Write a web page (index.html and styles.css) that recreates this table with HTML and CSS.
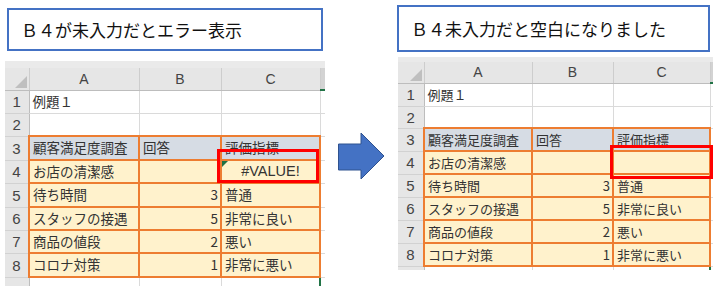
FILE: index.html
```html
<!DOCTYPE html>
<html lang="ja">
<head>
<meta charset="utf-8">
<title>B4 未入力</title>
<link rel="stylesheet" href="styles.css">
</head>
<body>
<div class="page">
  <section class="panel panel-left">
    <div class="title">Ｂ４が未入力だとエラー表示</div>
    <div class="sheet">
      <table>
        <colgroup><col class="c-rn"><col class="c-a"><col class="c-b"><col class="c-c"><col class="c-d"></colgroup>
        <tr class="hdr"><th class="corner"><span class="tri"></span></th><th>A</th><th>B</th><th>C</th><th class="dcol"></th></tr>
        <tr class="r1"><th class="rn">1</th><td>例題１</td><td></td><td></td><td></td></tr>
        <tr class="r2"><th class="rn">2</th><td></td><td></td><td></td><td></td></tr>
        <tr class="r3"><th class="rn">3</th><td class="o h">顧客満足度調査</td><td class="o h">回答</td><td class="o h">評価指標</td><td></td></tr>
        <tr class="r4"><th class="rn">4</th><td class="o f">お店の清潔感</td><td class="o f"></td><td class="o f err"><span class="flag"></span>#VALUE!</td><td></td></tr>
        <tr class="r5"><th class="rn">5</th><td class="o f">待ち時間</td><td class="o f num">3</td><td class="o f">普通</td><td></td></tr>
        <tr class="r6"><th class="rn">6</th><td class="o f">スタッフの接遇</td><td class="o f num">5</td><td class="o f">非常に良い</td><td></td></tr>
        <tr class="r7"><th class="rn">7</th><td class="o f">商品の値段</td><td class="o f num">2</td><td class="o f">悪い</td><td></td></tr>
        <tr class="r8"><th class="rn">8</th><td class="o f">コロナ対策</td><td class="o f num">1</td><td class="o f">非常に悪い</td><td></td></tr>
        <tr class="r9"><th class="rn"></th><td></td><td></td><td></td><td class="sel"></td></tr>
      </table>
      <div class="redbox"></div>
    </div>
  </section>

  <svg class="arrow" width="47" height="48" viewBox="0 0 47 48" aria-hidden="true">
    <polygon points="0.5,12 23,12 23,1 46,24 23,47 23,38 0.5,38" fill="#4472C4" stroke="#2F528F" stroke-width="1"/>
  </svg>

  <section class="panel panel-right">
    <div class="title">Ｂ４未入力だと空白になりました</div>
    <div class="sheet">
      <table>
        <colgroup><col class="c-rn"><col class="c-a"><col class="c-b"><col class="c-c"><col class="c-d"></colgroup>
        <tr class="hdr"><th class="corner"><span class="tri"></span></th><th>A</th><th>B</th><th>C</th><th class="dcol"></th></tr>
        <tr class="r1"><th class="rn">1</th><td>例題１</td><td></td><td></td><td></td></tr>
        <tr class="r2"><th class="rn">2</th><td></td><td></td><td></td><td></td></tr>
        <tr class="r3"><th class="rn">3</th><td class="o h">顧客満足度調査</td><td class="o h">回答</td><td class="o h">評価指標</td><td></td></tr>
        <tr class="r4"><th class="rn">4</th><td class="o f">お店の清潔感</td><td class="o f"></td><td class="o f"></td><td></td></tr>
        <tr class="r5"><th class="rn">5</th><td class="o f">待ち時間</td><td class="o f num">3</td><td class="o f">普通</td><td></td></tr>
        <tr class="r6"><th class="rn">6</th><td class="o f">スタッフの接遇</td><td class="o f num">5</td><td class="o f">非常に良い</td><td></td></tr>
        <tr class="r7"><th class="rn">7</th><td class="o f">商品の値段</td><td class="o f num">2</td><td class="o f">悪い</td><td></td></tr>
        <tr class="r8"><th class="rn">8</th><td class="o f">コロナ対策</td><td class="o f num">1</td><td class="o f">非常に悪い</td><td></td></tr>
        <tr class="r9"><th class="rn"></th><td></td><td></td><td></td><td class="sel"></td></tr>
      </table>
      <div class="redbox"></div>
    </div>
  </section>
</div>
</body>
</html>
```

FILE: styles.css
```css
html, body {
  margin: 0;
  padding: 0;
  background: #ffffff;
}

.page {
  display: flex;
  align-items: flex-start;
  padding-left: 5px;
  height: 286px;
  overflow: hidden;
  font-family: "Noto Sans CJK JP", sans-serif;
  color: #2b2b2b;
}

.panel {
  display: flex;
  flex-direction: column;
}

.title {
  box-sizing: border-box;
  border: 2px solid #4472C4;
  background: #fff;
  display: flex;
  align-items: center;
  font-family: "Noto Sans CJK JP", serif;
  font-weight: 400;
  font-size: 17px;
  color: #111;
  white-space: nowrap;
}

.panel-left {
  width: 320px;
  padding-top: 8px;
}
.panel-left .title {
  margin-left: 2px;
  width: 316px;
  height: 43px;
  padding-left: 12px;
}
.panel-left .sheet {
  margin-top: 10px;
  width: 320px;
  height: 225px;
  padding-top: 7px;
}

.arrow {
  flex: none;
  margin-left: 13px;
  margin-top: 132px;
}

.panel-right {
  width: 316px;
  margin-left: 12px;
  padding-top: 5px;
}
.panel-right .title {
  width: 313px;
  height: 47px;
  padding-left: 12px;
}
.panel-right .sheet {
  margin-top: 5px;
  margin-left: 1px;
  width: 315px;
  height: 213px;
  padding-top: 5px;
}

/* sheet */
.sheet {
  position: relative;
  box-sizing: border-box;
  background: #eaeaea;
  overflow: hidden;
}

.sheet table {
  border-collapse: collapse;
  table-layout: fixed;
  width: 100%;
  background: #fff;
}

.panel-left col.c-rn { width: 24px; }
.panel-left col.c-a { width: 110px; }
.panel-left col.c-b { width: 82px; }
.panel-left col.c-c { width: 99px; }
.panel-left col.c-d { width: 5px; }

.panel-right col.c-rn { width: 26px; }
.panel-right col.c-a { width: 108px; }
.panel-right col.c-b { width: 81px; }
.panel-right col.c-c { width: 97px; }
.panel-right col.c-d { width: 3px; }

.sheet th, .sheet td {
  padding: 0;
  white-space: nowrap;
  overflow: hidden;
  line-height: 1;
  vertical-align: middle;
}

.sheet td {
  border: 1px solid #dadada;
  padding-left: 3px;
  font-size: 13.5px;
  color: #333;
}
.panel-right .sheet td { font-size: 13px; }

.hdr th {
  background: #e6e6e6;
  border-right: 1px solid #cdcdcd;
  border-bottom: 1px solid #bdbdbd;
  font-family: "Liberation Sans", sans-serif;
  font-weight: normal;
  font-size: 14px;
  color: #444;
  text-align: center;
}
.panel-left .hdr { height: 22px; }
.panel-right .hdr { height: 21px; }

.hdr th.dcol {
  background: #d3d3d3;
  border-bottom: 2px solid #217346;
}

.corner { position: relative; }
.tri {
  position: absolute;
  right: 2px;
  bottom: 2px;
  width: 0;
  height: 0;
  border-left: 12px solid transparent;
  border-bottom: 12px solid #bfbfbf;
}

th.rn {
  background: #e6e6e6;
  border-bottom: 1px solid #d2d2d2;
  border-right: 1px solid #bdbdbd;
  font-family: "Liberation Sans", sans-serif;
  font-weight: normal;
  font-size: 15px;
  color: #444;
  text-align: center;
}

.panel-left .r1, .panel-left .r2, .panel-left .r4,
.panel-left .r6, .panel-left .r7 { height: 23px; }
.panel-left .r3, .panel-left .r5, .panel-left .r8 { height: 24px; }
.panel-left .r9 { height: 14px; }

.panel-right .r1, .panel-right .r3, .panel-right .r4, .panel-right .r5,
.panel-right .r6, .panel-right .r7, .panel-right .r8 { height: 23px; }
.panel-right .r2 { height: 22px; }
.panel-right .r9 { height: 10px; }

.sheet td.o { border: 2px solid #ED7D31; }
.sheet td.h { background: #D6DCE4; }
.sheet td.f { background: #FFF2CC; }
.sheet td.num { text-align: right; padding-right: 2px; }

.sheet td.err {
  position: relative;
  text-align: center;
  font-family: "Liberation Sans", sans-serif;
  font-size: 14.5px;
  padding-left: 0;
}
.flag {
  position: absolute;
  left: 0;
  top: 0;
  width: 0;
  height: 0;
  border-top: 6px solid #1e7145;
  border-right: 6px solid transparent;
}

.sheet td.sel { border-left: 2px solid #217346; }

.redbox {
  position: absolute;
  left: 212px;
  top: 88px;
  width: 102px;
  height: 34px;
  box-sizing: border-box;
  border: 3px solid #ff0000;
}
.panel-right .redbox { width: 103px; }
```
